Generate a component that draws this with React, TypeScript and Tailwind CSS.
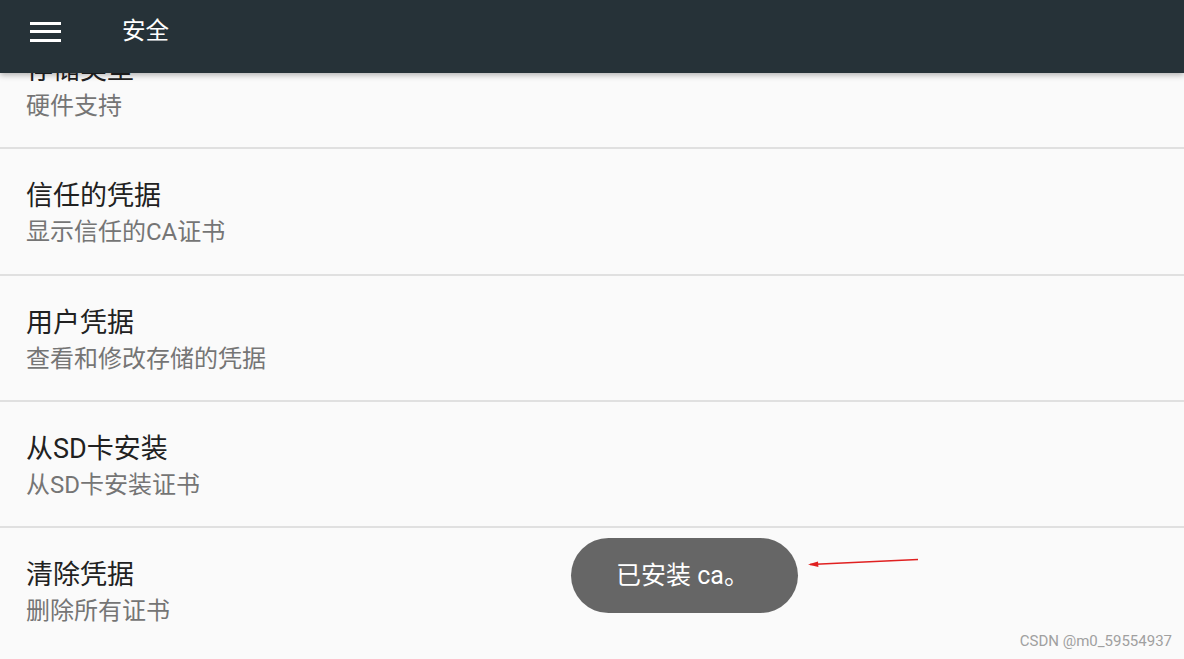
import React from 'react';

const items = [
  { title: '存储类型', sub: '硬件支持' },
  { title: '信任的凭据', sub: '显示信任的CA证书' },
  { title: '用户凭据', sub: '查看和修改存储的凭据' },
  { title: '从SD卡安装', sub: '从SD卡安装证书' },
  { title: '清除凭据', sub: '删除所有证书' },
];

export default function App() {
  return (
    <div
      className="relative w-[1184px] h-[659px] overflow-hidden bg-[#fafafa]"
      style={{ fontFamily: 'Roboto, "Noto Sans CJK SC", sans-serif' }}
    >
      {/* Toolbar */}
      <header className="relative z-10 h-[73px] bg-[#263238] flex items-center pb-[10px] shadow-[0_2px_6px_rgba(0,0,0,0.3)]">
        <div className="ml-[30px] w-[31px] flex flex-col gap-[5.5px]">
          <span className="h-[3px] bg-white" />
          <span className="h-[3px] bg-white" />
          <span className="h-[3px] bg-white" />
        </div>
        <span className="ml-[61px] text-[23.5px] text-white leading-none">安全</span>
      </header>

      {/* List */}
      <div className="-mt-[50px]">
        {items.map((it, i) => (
          <div
            key={it.title}
            className={`h-[126.3px] pl-[26px] pt-[29px] ${i < items.length - 1 ? 'border-b-2 border-[#e0e0e0]' : ''}`}
          >
            <div className="text-[27px] leading-[36px] text-[#212121]">{it.title}</div>
            <div className="text-[24px] leading-[36px] text-[#757575]">{it.sub}</div>
          </div>
        ))}
      </div>

      {/* Toast */}
      <div className="absolute left-[571px] top-[538px] w-[227px] h-[75px] rounded-full bg-[#666666] flex items-center pl-[45px]">
        <span className="text-[25px] text-white leading-none">已安装 ca。</span>
      </div>

      {/* Red arrow annotation */}
      <svg className="absolute left-[804px] top-[555px]" width="118" height="16" viewBox="0 0 118 16">
        <line x1="6" y1="9.5" x2="114" y2="4.5" stroke="#e02020" strokeWidth="1.5" />
        <path d="M4 9.6 L14 6.6 L14.4 12 Z" fill="#e02020" />
      </svg>

      {/* Watermark */}
      <div className="absolute right-[12px] bottom-[10px] text-[15px] text-[#a0a0a0] leading-none">
        CSDN @m0_59554937
      </div>
    </div>
  );
}
